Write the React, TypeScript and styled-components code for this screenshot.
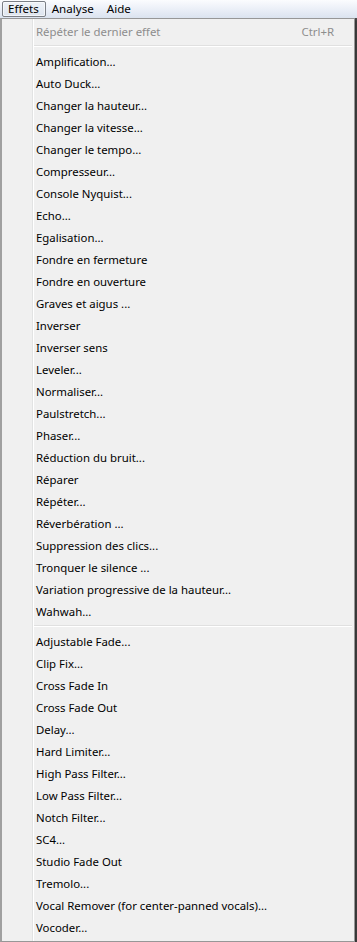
import { FunctionComponent } from "react";
import styled, { createGlobalStyle } from "styled-components";

type Entry = { label: string; shortcut?: string; disabled?: boolean } | "sep";

const entries: Entry[] = [
  { label: "Répéter le dernier effet", shortcut: "Ctrl+R", disabled: true },
  "sep",
  { label: "Amplification..." },
  { label: "Auto Duck..." },
  { label: "Changer la hauteur..." },
  { label: "Changer la vitesse..." },
  { label: "Changer le tempo..." },
  { label: "Compresseur..." },
  { label: "Console Nyquist..." },
  { label: "Echo..." },
  { label: "Egalisation..." },
  { label: "Fondre en fermeture" },
  { label: "Fondre en ouverture" },
  { label: "Graves et aigus ..." },
  { label: "Inverser" },
  { label: "Inverser sens" },
  { label: "Leveler..." },
  { label: "Normaliser..." },
  { label: "Paulstretch..." },
  { label: "Phaser..." },
  { label: "Réduction du bruit..." },
  { label: "Réparer" },
  { label: "Répéter..." },
  { label: "Réverbération ..." },
  { label: "Suppression des clics..." },
  { label: "Tronquer le silence ..." },
  { label: "Variation progressive de la hauteur..." },
  { label: "Wahwah..." },
  "sep",
  { label: "Adjustable Fade..." },
  { label: "Clip Fix..." },
  { label: "Cross Fade In" },
  { label: "Cross Fade Out" },
  { label: "Delay..." },
  { label: "Hard Limiter..." },
  { label: "High Pass Filter..." },
  { label: "Low Pass Filter..." },
  { label: "Notch Filter..." },
  { label: "SC4..." },
  { label: "Studio Fade Out" },
  { label: "Tremolo..." },
  { label: "Vocal Remover (for center-panned vocals)..." },
  { label: "Vocoder..." },
];

const GlobalStyle = createGlobalStyle`
  html, body {
    margin: 0;
    padding: 0;
    background: #5a5a5a;
  }
  body {
    font-family: "Segoe UI", "Noto Sans", "Liberation Sans", sans-serif;
    font-size: 11.4px;
    color: #000000;
  }
`;

const App: FunctionComponent = () => {
  return (
    <>
      <GlobalStyle />
      <Screen>
        <MenuBar>
          <MenuBarItem active>Effets</MenuBarItem>
          <MenuBarItem>Analyse</MenuBarItem>
          <MenuBarItem>Aide</MenuBarItem>
        </MenuBar>
        <DropDown>
          {entries.map((entry, i) =>
            entry === "sep" ? (
              <Separator key={i} />
            ) : (
              <Item key={i} disabled={!!entry.disabled}>
                <ItemLabel>{entry.label}</ItemLabel>
                {entry.shortcut && <Shortcut>{entry.shortcut}</Shortcut>}
              </Item>
            ),
          )}
        </DropDown>
      </Screen>
    </>
  );
};

const Screen = styled.div`
  width: 357px;
  height: 942px;
  display: flex;
  flex-direction: column;
  background: #4b4b4b;
  overflow: hidden;
`;

const MenuBar = styled.div`
  height: 18px;
  flex-shrink: 0;
  display: flex;
  align-items: stretch;
  padding: 1px 0 0 2px;
  box-sizing: border-box;
  background: linear-gradient(#fbfcfe, #e8edf6 60%, #dbe3ef);
`;

const MenuBarItem = styled.div<{ active?: boolean }>`
  height: 16px;
  box-sizing: border-box;
  display: flex;
  align-items: center;
  padding: 0 6px 1px 5px;
  font-size: 11.6px;
  line-height: 1;
  border: 1px solid ${({ active }) => (active ? "#7b7f86" : "transparent")};
  border-radius: 2px;
  background: ${({ active }) =>
    active ? "linear-gradient(#eef2f8, #dde4ee)" : "transparent"};
  box-shadow: ${({ active }) =>
    active ? "inset 0 0 0 1px rgba(255,255,255,0.6)" : "none"};
`;

const DropDown = styled.div`
  flex: 1;
  width: 355px;
  box-sizing: border-box;
  padding: 1px 2px 0 2px;
  border: 1px solid #979797;
  border-left: 2px solid #a0a0a0;
  background: linear-gradient(
    to right,
    #f0f0f0 0,
    #f0f0f0 30px,
    #e2e3e3 30px,
    #e2e3e3 31px,
    #ffffff 31px,
    #ffffff 32px,
    #f0f0f0 32px
  );
  box-shadow: 2px 2px 2px rgba(0, 0, 0, 0.3);
`;

const Item = styled.div<{ disabled: boolean }>`
  height: 22px;
  display: flex;
  align-items: center;
  justify-content: space-between;
  padding: 0 18px 0 32px;
  color: ${({ disabled }) => (disabled ? "#8d8d8d" : "#000000")};
  white-space: nowrap;
`;

const ItemLabel = styled.span``;

const Shortcut = styled.span``;

const Separator = styled.div`
  height: 8px;
  margin-left: 30px;
  display: flex;
  flex-direction: column;
  justify-content: center;

  &::before {
    content: "";
    display: block;
    height: 1px;
    background: #e0e0e0;
  }
  &::after {
    content: "";
    display: block;
    height: 1px;
    background: #ffffff;
  }
`;

export default App;
